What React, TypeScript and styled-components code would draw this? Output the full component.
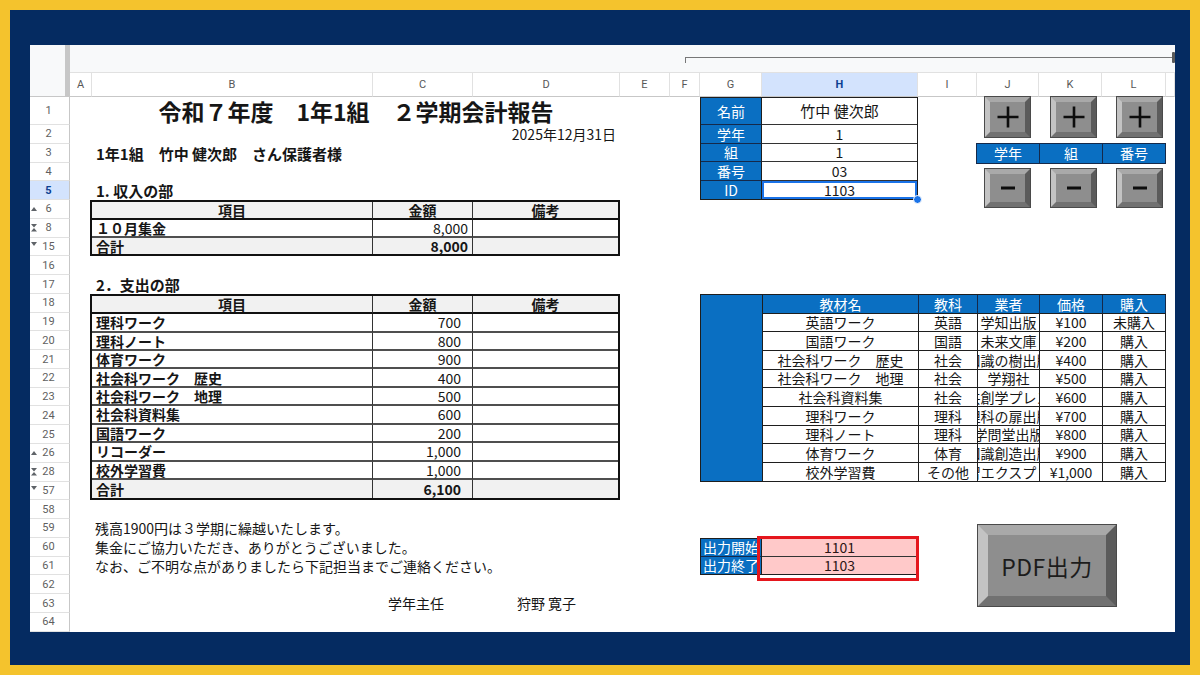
import React from 'react';
import styled, { createGlobalStyle, css } from 'styled-components';

const GlobalStyle = createGlobalStyle`
  html, body {
    margin: 0;
    padding: 0;
  }
  body {
    width: 1200px;
    height: 675px;
    overflow: hidden;
    font-family: "Noto Sans CJK JP", "Noto Sans", sans-serif;
    color: #161616;
  }
`;

const BLUE = '#0a6fc2';
const NAVY_LINE = '#15294a';
const GRID_INK = '#1e1e1e';

// 表示中の列・行（非表示の行は飛ばしている）
const LETTERS = ['A', 'B', 'C', 'D', 'E', 'F', 'G', 'H', 'I', 'J', 'K', 'L', 'M'];
const ROWS = [1, 2, 3, 4, 5, 6, 8, 15, 16, 17, 18, 19, 20, 21, 22, 23, 24, 25, 26, 28, 57, 58, 59, 60, 61, 62, 63, 64];
const MARKERS: Record<number, 'up' | 'both' | 'down'> = { 6: 'up', 8: 'both', 15: 'down', 26: 'up', 28: 'both', 57: 'down' };

const col = (l: string) => LETTERS.indexOf(l) + 2;
const row = (n: number) => ROWS.indexOf(n) + 3;

interface Area {
  $c: string;
  $c2?: string;
  $r: number;
  $r2?: number;
}

const area = css<Area>`
  grid-column: ${({ $c, $c2 }) => `${col($c)} / ${col($c2 ?? $c) + 1}`};
  grid-row: ${({ $r, $r2 }) => `${row($r)} / ${row($r2 ?? $r) + 1}`};
`;

/* ---------- 外枠 ---------- */

const Frame = styled.div`
  width: 1200px;
  height: 675px;
  box-sizing: border-box;
  padding: 10px;
  background: #f4c32d;
`;

const Board = styled.div`
  height: 100%;
  box-sizing: border-box;
  padding: 35px 15px 0 20px;
  background: #052b61;
`;

const Sheet = styled.div`
  display: grid;
  grid-template-columns: 40px 22px 281px 100px 147px 50px 30px 62px 156px 59px 62px 63px 64px 1fr;
  grid-template-rows: 28px 24px 28px repeat(27, 18.78px);
  width: 1145px;
  height: 587px;
  line-height: 1.15;
  background: #fff;
  overflow: hidden;
`;

/* ---------- 見出し（行番号・列記号） ---------- */

const Corner = styled.div`
  grid-column: 1;
  grid-row: 1 / 3;
  background: #f8f9fa;
  border-right: 5px solid #c7c7c7;
  border-bottom: 1px solid #c7c7c7;
`;

const TopBand = styled.div`
  grid-column: 2 / -1;
  grid-row: 1;
  display: flex;
  align-items: center;
  padding-left: 615px;
  background: #f8f9fa;
  border-bottom: 1px solid #e1e1e1;
`;

const Track = styled.div`
  position: relative;
  flex: 1;
  height: 5px;
  margin-top: 3px;
  border-top: 1px solid #777;
  border-left: 1px solid #777;

  &::after {
    content: '';
    position: absolute;
    right: 0;
    top: -6px;
    width: 3px;
    height: 11px;
    border-radius: 1px;
    background: #5a5a5a;
  }
`;

const ColHead = styled.div<{ $i: number; $active?: boolean }>`
  grid-column: ${({ $i }) => $i + 2};
  grid-row: 2;
  display: flex;
  align-items: center;
  justify-content: center;
  font: 11px "Roboto", "Liberation Sans", sans-serif;
  color: #575757;
  background: #fff;
  border-right: 1px solid #e1e1e1;
  border-bottom: 1px solid #c7c7c7;
  ${({ $active }) =>
    $active &&
    css`
      background: #d3e3fd;
      color: #0b3f91;
      font-weight: 700;
    `}
`;

const RowHead = styled.div<{ $i: number; $active?: boolean }>`
  position: relative;
  grid-column: 1;
  grid-row: ${({ $i }) => $i + 3};
  display: flex;
  align-items: center;
  justify-content: center;
  padding-right: 2px;
  font: 11px "Roboto", "Liberation Sans", sans-serif;
  color: #5f5f5f;
  background: #fff;
  border-right: 1px solid #c7c7c7;
  border-bottom: 1px solid #e1e1e1;
  ${({ $active }) =>
    $active &&
    css`
      background: #d3e3fd;
      color: #0b3f91;
      font-weight: 700;
    `}
`;

const Marker = styled.svg`
  position: absolute;
  left: 1px;
  top: 3px;
`;

const GroupMarker = ({ kind }: { kind: 'up' | 'both' | 'down' }) => (
  <Marker width="6" height="10" viewBox="0 0 6 10">
    {kind === 'up' && <path d="M0 8 L3 4 L6 8 Z" fill="#5f6368" />}
    {kind === 'both' && <path d="M0 2 L6 2 L3 5.5 Z M0 9.5 L3 6 L6 9.5 Z" fill="#5f6368" />}
    {kind === 'down' && <path d="M0 1 L6 1 L3 5 Z" fill="#5f6368" />}
  </Marker>
);

/* ---------- 本文 ---------- */

const Title = styled.div<Area>`
  ${area}
  display: flex;
  align-items: center;
  justify-content: center;
  font-size: 23px;
  font-weight: 700;
  white-space: pre;
`;

const DateLine = styled.div<Area>`
  ${area}
  display: flex;
  align-items: center;
  justify-content: flex-end;
  padding-right: 4px;
  font-size: 14px;
`;

const Heading = styled.div<Area>`
  ${area}
  display: flex;
  align-items: center;
  padding-left: 4px;
  font-size: 15px;
  font-weight: 700;
  white-space: pre;
`;

const Note = styled.div<Area & { $indent?: number; $center?: boolean }>`
  ${area}
  display: flex;
  align-items: center;
  justify-content: ${({ $center }) => ($center ? 'center' : 'flex-start')};
  padding-left: ${({ $indent }) => $indent ?? 3}px;
  font-size: 14px;
  white-space: pre;
`;

/* 収入・支出の表 */

const Ledger = styled.div<Area & { $numPad: number }>`
  ${area}
  --num-pad: ${({ $numPad }) => $numPad}px;
  margin-left: -2px;
  display: grid;
  grid-template-columns: 281px 100px 1fr;
  grid-auto-rows: 1fr;
  border: 2px solid #111;
  background: #fff;
`;

type RowKind = 'head' | 'body' | 'total';

const LedgerRow = styled.div<{ $kind: RowKind }>`
  display: contents;

  & > span {
    background: ${({ $kind }) => ($kind === 'body' ? '#fff' : '#f1f1f1')};
    border-bottom: ${({ $kind }) =>
      $kind === 'head' ? '2px solid #111' : $kind === 'body' ? '2px solid #4f4f4f' : 'none'};
    font-weight: ${({ $kind }) => ($kind === 'body' ? 400 : 700)};
  }

  & > span:not(:last-child) {
    border-right: 1px solid #333;
  }
`;

const LedgerCell = styled.span<{ $align: 'left' | 'center' | 'right'; $bold?: boolean }>`
  display: flex;
  align-items: center;
  justify-content: ${({ $align }) =>
    $align === 'left' ? 'flex-start' : $align === 'right' ? 'flex-end' : 'center'};
  min-width: 0;
  padding: 0 ${({ $align }) => ($align === 'right' ? 'var(--num-pad)' : '4px')} 0 4px;
  font-size: 14px;
  white-space: pre;
  ${({ $bold }) => $bold && 'font-weight: 700 !important;'}
`;

/* 生徒情報 */

const InfoTable = styled.div<Area>`
  ${area}
  display: grid;
  grid-template-columns: 61px 1fr;
  grid-template-rows: 27px repeat(4, 1fr);
  border: 1px solid ${GRID_INK};
  background: #fff;
`;

const InfoLabel = styled.div<{ $last?: boolean }>`
  display: flex;
  align-items: center;
  justify-content: center;
  color: #fff;
  background: ${BLUE};
  font-size: 14px;
  border-right: 1px solid ${GRID_INK};
  border-bottom: ${({ $last }) => ($last ? 'none' : `1px solid ${NAVY_LINE}`)};
`;

const InfoValue = styled.div<{ $last?: boolean; $selected?: boolean; $large?: boolean }>`
  position: relative;
  display: flex;
  align-items: center;
  justify-content: center;
  font-size: ${({ $large }) => ($large ? 15 : 14)}px;
  border-bottom: ${({ $last }) => ($last ? 'none' : '1px solid #333')};
  ${({ $selected }) =>
    $selected &&
    css`
      box-shadow: inset 0 0 0 2px #1a73e8;
      &::after {
        content: '';
        position: absolute;
        right: -5px;
        bottom: -5px;
        width: 7px;
        height: 7px;
        border-radius: 50%;
        background: #1a73e8;
        border: 1px solid #fff;
      }
    `}
`;

/* 学年・組・番号の増減ボタン */

const Controls = styled.div<Area>`
  ${area}
  display: flex;
  flex-direction: column;
  align-items: flex-start;
`;

const StepRow = styled.div<{ $top: number }>`
  display: flex;
  gap: 21px;
  padding-left: 8px;
  margin-top: ${({ $top }) => $top}px;
`;

const BevelButton = styled.div<{ $w: number; $h: number; $bevel: number }>`
  box-sizing: border-box;
  display: flex;
  align-items: center;
  justify-content: center;
  width: ${({ $w }) => $w}px;
  height: ${({ $h }) => $h}px;
  border: ${({ $bevel }) => $bevel}px solid;
  border-color: #a9a9a9 #5b5b5b #717171 #c3c3c3;
  outline: 1px solid #4a4a4a;
  background: #8e8e8e;
  color: #1a1a1a;
`;

const Band = styled.div`
  box-sizing: border-box;
  display: grid;
  grid-template-columns: 62px 63px 1fr;
  width: 190px;
  height: 21px;
  margin-top: 6px;
  margin-left: -1px;
  background: ${BLUE};
  border: 1px solid ${NAVY_LINE};
`;

const BandCell = styled.div`
  display: flex;
  align-items: center;
  justify-content: center;
  color: #fff;
  font-size: 14px;

  & + & {
    border-left: 1px solid ${NAVY_LINE};
  }
`;

const PlusIcon = () => (
  <svg width="24" height="24" viewBox="0 0 24 24">
    <path d="M12 1.5 V22.5 M1.5 12 H22.5" stroke="#0d0d0d" strokeWidth="2.6" />
  </svg>
);

const MinusIcon = () => (
  <svg width="14" height="4" viewBox="0 0 14 4">
    <rect x="0" y="0.5" width="14" height="3" fill="#0d0d0d" />
  </svg>
);

/* 教材一覧 */

const Materials = styled.div<Area>`
  ${area}
  display: grid;
  grid-template-columns: 62px 156px 59px 62px 63px 1fr;
  grid-template-rows: repeat(10, 1fr);
  border-top: 1px solid ${GRID_INK};
  border-left: 1px solid ${GRID_INK};
  background: #fff;
`;

const MaterialsSide = styled.div`
  grid-column: 1;
  grid-row: 1 / -1;
  background: ${BLUE};
  border-right: 1px solid ${GRID_INK};
  border-bottom: 1px solid ${GRID_INK};
`;

// 業者名は列幅からはみ出すので、中央揃えのまま両端を切る
const MatCell = styled.div<{ $head?: boolean; $clip?: boolean }>`
  display: flex;
  align-items: center;
  justify-content: center;
  min-width: 0;
  white-space: pre;
  font-size: 14px;
  color: ${({ $head }) => ($head ? '#fff' : '#161616')};
  background: ${({ $head }) => ($head ? BLUE : '#fff')};
  border-right: 1px solid ${({ $head }) => ($head ? NAVY_LINE : GRID_INK)};
  border-bottom: 1px solid ${GRID_INK};
  ${({ $clip }) => $clip && 'overflow: hidden;'}
`;

/* 出力範囲とPDFボタン */

const OutputRange = styled.div<Area>`
  ${area}
  position: relative;
  display: grid;
  grid-template-columns: 61px 1fr;
  grid-template-rows: 1fr 1fr;
  border: 1px solid ${GRID_INK};

  &::after {
    content: '';
    position: absolute;
    left: 56px;
    top: -3px;
    width: 162px;
    height: 45px;
    box-sizing: border-box;
    border: 3px solid #e5161d;
  }
`;

const RangeLabel = styled.div<{ $first?: boolean }>`
  display: flex;
  align-items: center;
  padding-left: 2px;
  white-space: pre;
  color: #fff;
  background: ${BLUE};
  font-size: 14px;
  border-right: 1px solid ${GRID_INK};
  border-bottom: ${({ $first }) => ($first ? `1px solid ${NAVY_LINE}` : 'none')};
`;

const RangeValue = styled.div<{ $first?: boolean }>`
  display: flex;
  align-items: center;
  justify-content: center;
  font-size: 14px;
  color: #2b1515;
  background: #ffc9c9;
  border-bottom: ${({ $first }) => ($first ? '1px solid #333' : 'none')};
`;

const PdfSlot = styled.div<Area>`
  ${area}
  display: flex;
  align-items: flex-start;
  padding: 25px 0 0 1px;
`;

const PdfLabel = styled.span`
  font-size: 23px;
  color: #1c1c1c;
  letter-spacing: 0.5px;
`;

/* ---------- データ ---------- */

const income = [{ name: '１０月集金', amount: '8,000' }];

const expenses = [
  { name: '理科ワーク', amount: '700' },
  { name: '理科ノート', amount: '800' },
  { name: '体育ワーク', amount: '900' },
  { name: '社会科ワーク　歴史', amount: '400' },
  { name: '社会科ワーク　地理', amount: '500' },
  { name: '社会科資料集', amount: '600' },
  { name: '国語ワーク', amount: '200' },
  { name: 'リコーダー', amount: '1,000' },
  { name: '校外学習費', amount: '1,000' },
];

const materials = [
  ['英語ワーク', '英語', '学知出版', '¥100', '未購入'],
  ['国語ワーク', '国語', '未来文庫', '¥200', '購入'],
  ['社会科ワーク　歴史', '社会', '知識の樹出版', '¥400', '購入'],
  ['社会科ワーク　地理', '社会', '学翔社', '¥500', '購入'],
  ['社会科資料集', '社会', '共創学プレス', '¥600', '購入'],
  ['理科ワーク', '理科', '理科の扉出版', '¥700', '購入'],
  ['理科ノート', '理科', '学問堂出版', '¥800', '購入'],
  ['体育ワーク', '体育', '知識創造出版', '¥900', '購入'],
  ['校外学習費', 'その他', '学習エクスプレス', '¥1,000', '購入'],
];

const info = [
  ['名前', '竹中 健次郎'],
  ['学年', '1'],
  ['組', '1'],
  ['番号', '03'],
  ['ID', '1103'],
];

type LedgerProps = {
  area: Area;
  numPad: number;
  items: { name: string; amount: string }[];
  total: string;
};

const LedgerTable = ({ area: a, numPad, items, total }: LedgerProps) => (
  <Ledger {...a} $numPad={numPad}>
    <LedgerRow $kind="head">
      <LedgerCell $align="center">項目</LedgerCell>
      <LedgerCell $align="center">金額</LedgerCell>
      <LedgerCell $align="center">備考</LedgerCell>
    </LedgerRow>
    {items.map((it) => (
      <LedgerRow $kind="body" key={it.name}>
        <LedgerCell $align="left" $bold>
          {it.name}
        </LedgerCell>
        <LedgerCell $align="right">{it.amount}</LedgerCell>
        <LedgerCell $align="left" />
      </LedgerRow>
    ))}
    <LedgerRow $kind="total">
      <LedgerCell $align="left">合計</LedgerCell>
      <LedgerCell $align="right">{total}</LedgerCell>
      <LedgerCell $align="left" />
    </LedgerRow>
  </Ledger>
);

export default function App() {
  return (
    <>
      <GlobalStyle />
      <Frame>
        <Board>
          <Sheet>
            <Corner />
            <TopBand>
              <Track />
            </TopBand>
            {LETTERS.slice(0, 12).map((l, i) => (
              <ColHead key={l} $i={i} $active={l === 'H'}>
                {l}
              </ColHead>
            ))}
            <ColHead $i={12} />
            {ROWS.map((n, i) => (
              <RowHead key={n} $i={i} $active={n === 5}>
                {MARKERS[n] && <GroupMarker kind={MARKERS[n]} />}
                {n}
              </RowHead>
            ))}

            <Title $c="B" $c2="D" $r={1}>
              令和７年度　1年1組　２学期会計報告
            </Title>
            <DateLine $c="D" $r={2}>
              2025年12月31日
            </DateLine>
            <Heading $c="B" $r={3}>
              1年1組　竹中 健次郎　さん保護者様
            </Heading>

            <Heading $c="B" $r={5}>
              1. 収入の部
            </Heading>
            <LedgerTable area={{ $c: 'B', $c2: 'D', $r: 6, $r2: 15 }} numPad={4} items={income} total="8,000" />

            <Heading $c="B" $r={17}>
              2．支出の部
            </Heading>
            <LedgerTable area={{ $c: 'B', $c2: 'D', $r: 18, $r2: 57 }} numPad={11} items={expenses} total="6,100" />

            <Note $c="B" $r={59}>
              残高1900円は３学期に繰越いたします。
            </Note>
            <Note $c="B" $r={60}>
              集金にご協力いただき、ありがとうございました。
            </Note>
            <Note $c="B" $r={61}>
              なお、ご不明な点がありましたら下記担当までご連絡ください。
            </Note>
            <Note $c="C" $r={63} $indent={15}>
              学年主任
            </Note>
            <Note $c="D" $r={63} $center $indent={0}>
              狩野 寛子
            </Note>

            <InfoTable $c="G" $c2="H" $r={1} $r2={5}>
              {info.map(([label, value], i) => (
                <React.Fragment key={label}>
                  <InfoLabel $last={i === info.length - 1}>{label}</InfoLabel>
                  <InfoValue
                    $last={i === info.length - 1}
                    $selected={label === 'ID'}
                    $large={i === 0}
                  >
                    {value}
                  </InfoValue>
                </React.Fragment>
              ))}
            </InfoTable>

            <Controls $c="J" $c2="L" $r={1} $r2={6}>
              <StepRow $top={0}>
                {[0, 1, 2].map((k) => (
                  <BevelButton key={k} $w={45} $h={40} $bevel={5}>
                    <PlusIcon />
                  </BevelButton>
                ))}
              </StepRow>
              <Band>
                <BandCell>学年</BandCell>
                <BandCell>組</BandCell>
                <BandCell>番号</BandCell>
              </Band>
              <StepRow $top={5}>
                {[0, 1, 2].map((k) => (
                  <BevelButton key={k} $w={45} $h={38} $bevel={5}>
                    <MinusIcon />
                  </BevelButton>
                ))}
              </StepRow>
            </Controls>

            <Materials $c="G" $c2="L" $r={18} $r2={28}>
              <MaterialsSide />
              {['教材名', '教科', '業者', '価格', '購入'].map((h) => (
                <MatCell $head key={h}>
                  {h}
                </MatCell>
              ))}
              {materials.map((m) =>
                m.map((v, j) => (
                  <MatCell key={`${m[0]}-${j}`} $clip={j === 2}>
                    {v}
                  </MatCell>
                )),
              )}
            </Materials>

            <OutputRange $c="G" $c2="H" $r={60} $r2={61}>
              <RangeLabel $first>出力開始</RangeLabel>
              <RangeValue $first>1101</RangeValue>
              <RangeLabel>出力終了</RangeLabel>
              <RangeValue>1103</RangeValue>
            </OutputRange>

            <PdfSlot $c="J" $c2="L" $r={58} $r2={64}>
              <BevelButton $w={138} $h={81} $bevel={10}>
                <PdfLabel>PDF出力</PdfLabel>
              </BevelButton>
            </PdfSlot>
          </Sheet>
        </Board>
      </Frame>
    </>
  );
}
